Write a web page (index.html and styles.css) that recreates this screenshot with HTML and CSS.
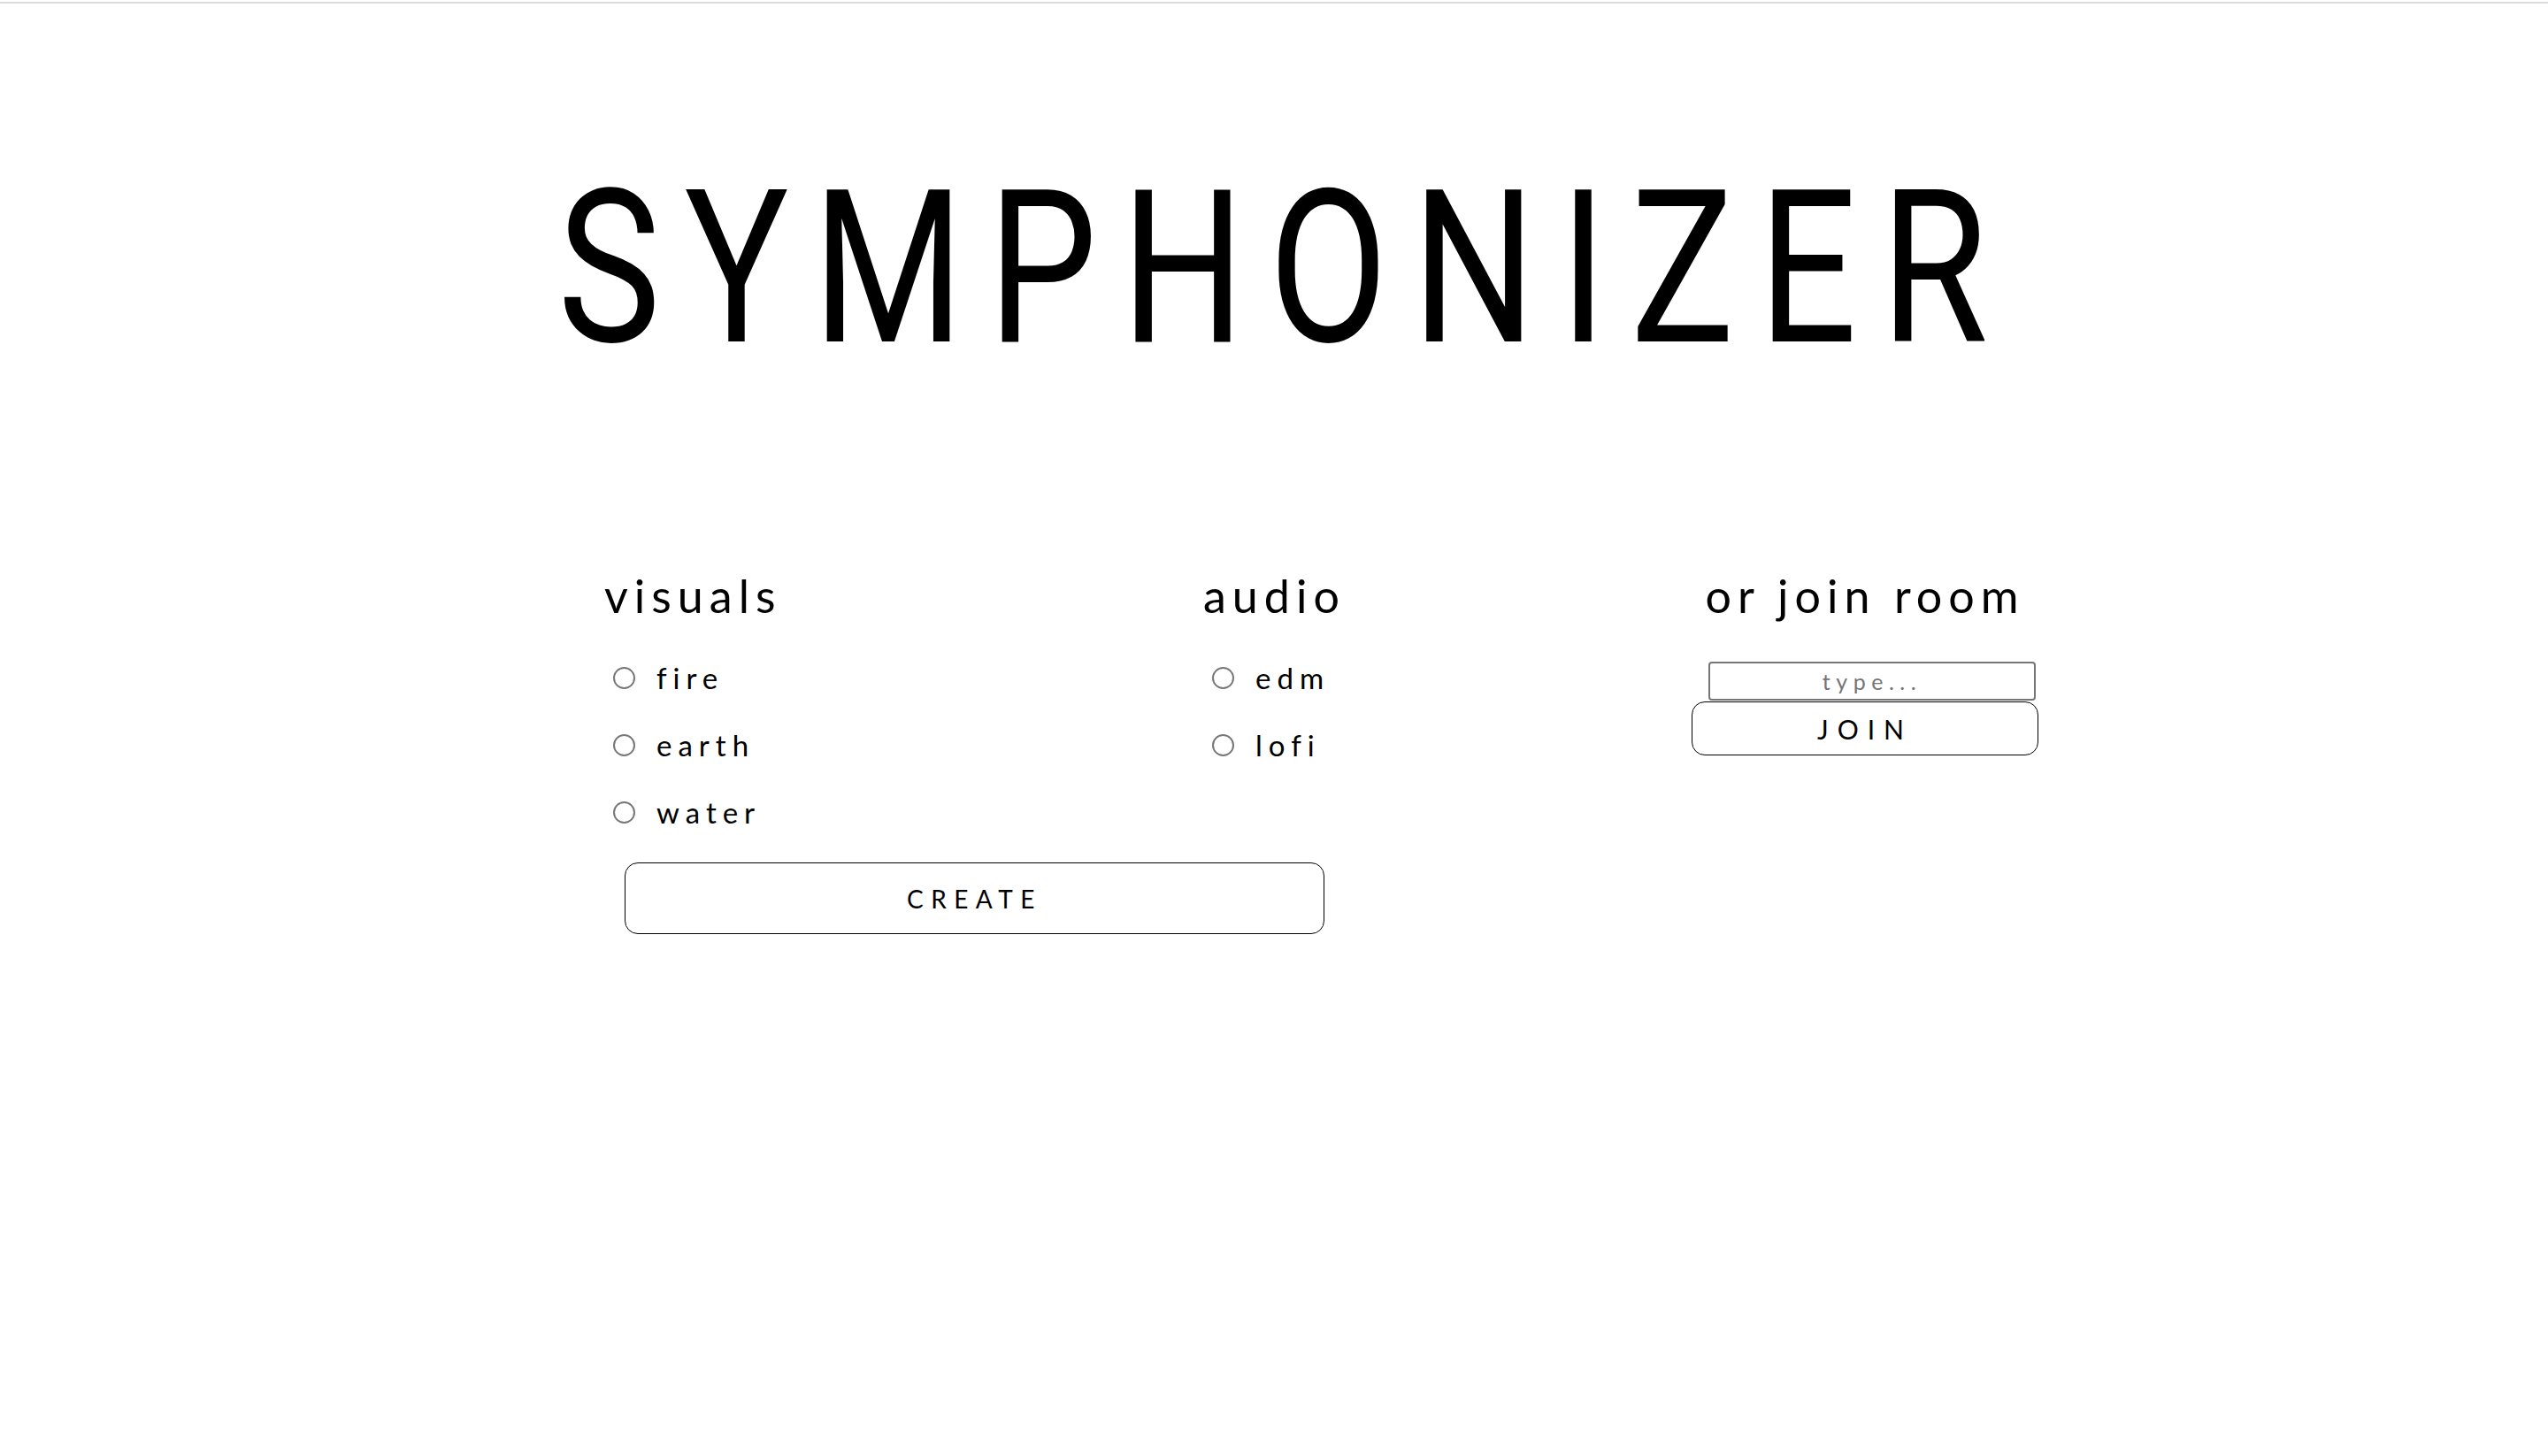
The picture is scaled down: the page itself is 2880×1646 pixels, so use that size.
FILE: index.html
```html
<!DOCTYPE html>
<html lang="en">
<head>
<meta charset="utf-8">
<title>Symphonizer</title>
<link rel="stylesheet" href="styles.css">
</head>
<body>
<div class="topline"></div>
<h1 class="title">SYMPHONIZER</h1>
<main class="panel">
  <form class="create">
    <div class="cols">
      <div class="col col-visuals">
        <h2 class="heading">visuals</h2>
        <div class="opts">
          <label class="opt"><input class="radio" type="radio" name="visual" value="fire"><span>fire</span></label>
          <label class="opt"><input class="radio" type="radio" name="visual" value="earth"><span>earth</span></label>
          <label class="opt"><input class="radio" type="radio" name="visual" value="water"><span>water</span></label>
        </div>
      </div>
      <div class="col col-audio">
        <h2 class="heading">audio</h2>
        <div class="opts">
          <label class="opt"><input class="radio" type="radio" name="audio" value="edm"><span>edm</span></label>
          <label class="opt"><input class="radio" type="radio" name="audio" value="lofi"><span>lofi</span></label>
        </div>
      </div>
    </div>
    <button class="btn btn-create" type="button">CREATE</button>
  </form>
  <section class="join">
    <h2 class="heading">or join room</h2>
    <input class="room" type="text" placeholder="type...">
    <button class="btn btn-join" type="button">JOIN</button>
  </section>
</main>
</body>
</html>
```
FILE: styles.css
```css
* { box-sizing: border-box; }

body {
  margin: 0;
  background: #fff;
  color: #000;
  font-family: Lato, "Open Sans", sans-serif;
}

.topline {
  height: 2px;
  margin-top: 2px;
  background: #dcdcdc;
}

.title {
  margin: 178px 0 0;
  font-family: Roboto, "Liberation Sans", sans-serif;
  font-weight: 400;
  font-size: 196px;
  line-height: 196px;
  letter-spacing: 27px;
  padding-left: 24px;
  text-align: center;
  transform: scaleY(1.234);
  transform-origin: center top;
}

.panel {
  display: flex;
  padding-left: 683px;
  margin-top: 264px;
}

.create {
  width: 860px;
  flex: none;
  margin: 0;
}

.cols {
  display: flex;
}

.col-visuals { width: 677px; flex: none; }
.col-audio { flex: 1; min-width: 0; }

.heading {
  margin: 0;
  font-weight: 400;
  font-size: 52px;
  line-height: 62px;
  letter-spacing: 7px;
  white-space: nowrap;
}

.opts {
  margin-top: 24px;
  display: flex;
  flex-direction: column;
}

.opt {
  display: flex;
  align-items: center;
  height: 76px;
  font-size: 33px;
  line-height: 40px;
  letter-spacing: 7px;
}

.radio {
  appearance: none;
  -webkit-appearance: none;
  width: 25px;
  height: 25px;
  margin: 0 24px 0 10px;
  border: 2px solid #777;
  border-radius: 50%;
  background: #fff;
  flex: none;
}

.btn {
  display: flex;
  align-items: center;
  justify-content: center;
  background: #fff;
  color: #000;
  border: 1px solid #000;
  border-radius: 15px;
  font-family: Lato, "Open Sans", sans-serif;
  font-weight: 400;
  padding: 0;
}

.btn-create {
  margin: 19px 0 0 23px;
  width: 791px;
  height: 81px;
  font-size: 28px;
  letter-spacing: 8.5px;
}

.join {
  width: 392px;
  flex: none;
  margin-left: 369px;
  display: flex;
  flex-direction: column;
  align-items: center;
}

.room {
  align-self: flex-start;
  margin: 44px 0 0 19px;
  width: 370px;
  height: 44px;
  border: 2px solid #767676;
  border-radius: 4px;
  text-align: center;
  font-family: Lato, "Open Sans", sans-serif;
  font-size: 25px;
  letter-spacing: 6.5px;
  color: #000;
  background: #fff;
}

.room::placeholder {
  color: #757575;
}

.btn-join {
  margin-top: 1px;
  width: 392px;
  height: 61px;
  font-size: 30px;
  letter-spacing: 10px;
}
```
